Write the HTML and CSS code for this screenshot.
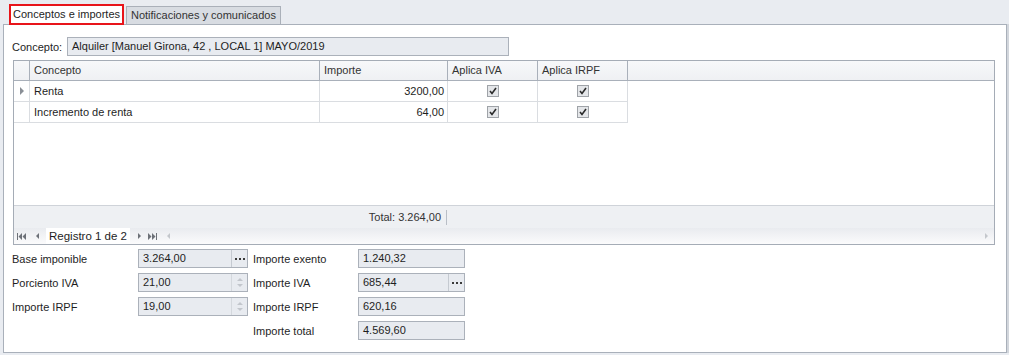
FILE: index.html
```html
<!DOCTYPE html>
<html lang="es">
<head>
  <meta charset="UTF-8">
  <title>Conceptos e importes</title>
  <link rel="stylesheet" href="styles.css">
</head>
<body>
  <div class="tabs">
    <div class="tab active">Conceptos e importes</div>
    <div class="tab">Notificaciones y comunicados</div>
  </div>
  <div class="panel">
    <div class="concept-row">
      <span class="lbl">Concepto:</span>
      <div class="box concept-box">Alquiler [Manuel Girona, 42 , LOCAL 1] MAYO/2019</div>
    </div>

    <div class="grid">
      <div class="row head">
        <div class="c ind"></div>
        <div class="c">Concepto</div>
        <div class="c">Importe</div>
        <div class="c">Aplica IVA</div>
        <div class="c">Aplica IRPF</div>
        <div class="c fill"></div>
      </div>
      <div class="row">
        <div class="c ind"><span class="arrow"></span></div>
        <div class="c">Renta</div>
        <div class="c num">3200,00</div>
        <div class="c mid"><svg class="chk" width="12" height="12" viewBox="0 0 12 12"><rect x="0.5" y="0.5" width="11" height="11" fill="#e4e6e9" stroke="#9fa3a8"/><path d="M3 6 L5 8.5 L9 3" fill="none" stroke="#2b2b2b" stroke-width="1.6"/></svg></div>
        <div class="c mid"><svg class="chk" width="12" height="12" viewBox="0 0 12 12"><rect x="0.5" y="0.5" width="11" height="11" fill="#e4e6e9" stroke="#9fa3a8"/><path d="M3 6 L5 8.5 L9 3" fill="none" stroke="#2b2b2b" stroke-width="1.6"/></svg></div>
        <div class="c fill"></div>
      </div>
      <div class="row">
        <div class="c ind"></div>
        <div class="c">Incremento de renta</div>
        <div class="c num">64,00</div>
        <div class="c mid"><svg class="chk" width="12" height="12" viewBox="0 0 12 12"><rect x="0.5" y="0.5" width="11" height="11" fill="#e4e6e9" stroke="#9fa3a8"/><path d="M3 6 L5 8.5 L9 3" fill="none" stroke="#2b2b2b" stroke-width="1.6"/></svg></div>
        <div class="c mid"><svg class="chk" width="12" height="12" viewBox="0 0 12 12"><rect x="0.5" y="0.5" width="11" height="11" fill="#e4e6e9" stroke="#9fa3a8"/><path d="M3 6 L5 8.5 L9 3" fill="none" stroke="#2b2b2b" stroke-width="1.6"/></svg></div>
        <div class="c fill"></div>
      </div>
      <div class="empty"></div>
      <div class="footer">
        <span class="total">Total: 3.264,00</span>
      </div>
      <div class="nav">
        <svg class="nb" width="9" height="7" viewBox="0 0 9 7"><rect x="0" y="0" width="1" height="7" fill="#6d7178"/><path d="M5 0 L1.5 3.5 L5 7 Z M9 0 L5.5 3.5 L9 7 Z" fill="#6d7178"/></svg>
        <span class="tri-l"></span>
        <span class="rec">Registro 1 de 2</span>
        <span class="tri-r"></span>
        <svg class="nb" width="9" height="7" viewBox="0 0 9 7"><path d="M0 0 L3.5 3.5 L0 7 Z M4 0 L7.5 3.5 L4 7 Z" fill="#6d7178"/><rect x="8" y="0" width="1" height="7" fill="#6d7178"/></svg>
        <span class="tri-l off"></span>
        <span class="spacer"></span>
        <span class="tri-r off"></span>
      </div>
    </div>

    <div class="form">
      <span class="lbl">Base imponible</span>
      <div class="box btn-box"><span>3.264,00</span><span class="dots"><i></i><i></i><i></i></span></div>
      <span class="lbl">Importe exento</span>
      <div class="box">1.240,32</div>

      <span class="lbl">Porciento IVA</span>
      <div class="box btn-box"><span>21,00</span><span class="spin"><i class="up"></i><i class="down"></i></span></div>
      <span class="lbl">Importe IVA</span>
      <div class="box btn-box"><span>685,44</span><span class="dots"><i></i><i></i><i></i></span></div>

      <span class="lbl">Importe IRPF</span>
      <div class="box btn-box"><span>19,00</span><span class="spin"><i class="up"></i><i class="down"></i></span></div>
      <span class="lbl">Importe IRPF</span>
      <div class="box">620,16</div>

      <span></span>
      <span></span>
      <span class="lbl">Importe total</span>
      <div class="box">4.569,60</div>
    </div>
  </div>
</body>
</html>
```

FILE: styles.css
```css
body {
  margin: 0;
  background: #e9ecf1;
  font-family: "Liberation Sans", Arial, sans-serif;
  font-size: 11px;
  color: #1e1e1e;
}
.tabs {
  display: flex;
  align-items: flex-end;
  height: 24px;
  padding-left: 9px;
}
.tab {
  box-sizing: border-box;
  height: 18px;
  padding: 0 4px;
  line-height: 16px;
  background: #d8dce2;
  border: 1px solid #aab0b9;
  border-bottom: none;
  color: #333;
  margin-left: 2px;
}
.tab.active {
  height: 21px;
  line-height: 17px;
  margin: 0 0 -1px 0;
  padding: 0 2px;
  background: #fff;
  border: 2px solid #e8141a;
  color: #1e1e1e;
  position: relative;
  z-index: 1;
}
.panel {
  box-sizing: border-box;
  margin-left: 3px;
  width: 1004px;
  height: 329px;
  background: #fff;
  border: 1px solid #a9b0ba;
  box-shadow: 2px 0 0 #d2d6dc;
  padding: 12px 0 0 8px;
}
.concept-row {
  display: flex;
  align-items: center;
  height: 19px;
}
.concept-row .lbl {
  width: 55px;
}
.box {
  box-sizing: border-box;
  height: 19px;
  line-height: 17px;
  background: #e8ebf0;
  border: 1px solid #abb1ba;
  padding-left: 4px;
  color: #1e1e1e;
}
.concept-box {
  width: 442px;
}
.grid {
  box-sizing: border-box;
  margin-top: 4px;
  margin-left: 1px;
  width: 982px;
  height: 185px;
  border: 1px solid #a5acb6;
  display: flex;
  flex-direction: column;
}
.row {
  display: grid;
  grid-template-columns: 16px 290px 128px 90px 90px 1fr;
  height: 21px;
}
.row .c {
  box-sizing: border-box;
  border-right: 1px solid #dadde1;
  border-bottom: 1px solid #dadde1;
  padding: 0 4px;
  line-height: 20px;
  white-space: nowrap;
}
.row.head {
  height: 20px;
  background: linear-gradient(#f7f8fa, #eef0f3);
}
.row.head .c {
  border-right: 1px solid #a9b0ba;
  border-bottom: 1px solid #a9b0ba;
  line-height: 19px;
  color: #333;
}
.row .c.fill {
  border: none;
}
.row.head .c.fill {
  border-bottom: 1px solid #a9b0ba;
}
.c.ind {
  padding: 0;
  display: flex;
  align-items: center;
  justify-content: center;
}
.arrow {
  width: 0;
  height: 0;
  border-left: 4px solid #8a8f96;
  border-top: 4px solid transparent;
  border-bottom: 4px solid transparent;
}
.c.num {
  text-align: right;
  padding-right: 3px;
}
.c.mid {
  display: flex;
  align-items: center;
  justify-content: center;
}
.empty {
  flex: 1;
}
.footer {
  box-sizing: border-box;
  height: 23px;
  border-top: 1px solid #cfd3d9;
  background: #eef0f3;
  display: flex;
  align-items: center;
  padding-left: 307px;
}
.total {
  width: 120px;
  white-space: nowrap;
  text-align: right;
  padding-right: 5px;
  border-right: 1px solid #b9bec6;
  line-height: 15px;
  color: #333;
}
.nav {
  height: 16px;
  display: flex;
  align-items: center;
  background: linear-gradient(#e9ebef, #fbfbfc);
  padding-left: 3px;
}
.nb {
  margin: 0 4px 0 0;
}
.tri-l, .tri-r {
  width: 0;
  height: 0;
  margin: 0 7px 0 6px;
  border-top: 3.5px solid transparent;
  border-bottom: 3.5px solid transparent;
}
.tri-l {
  border-right: 3.5px solid #6d7178;
}
.tri-r {
  border-left: 3.5px solid #6d7178;
}
.tri-l.off {
  border-right-color: #c4c7cc;
}
.tri-r.off {
  border-left-color: #c4c7cc;
  margin-right: 6px;
}
.rec {
  background: #fff;
  color: #1e1e1e;
  font-size: 11.5px;
  line-height: 16px;
  padding: 0 3px;
  margin-right: 2px;
}
.spacer {
  flex: 1;
}
.form {
  display: grid;
  grid-template-columns: 126px 110px 110px 107px;
  grid-auto-rows: 19px;
  row-gap: 5px;
  margin-top: 4px;
  align-items: center;
}
.form > .lbl:nth-child(4n+3) {
  padding-left: 5px;
}
.btn-box {
  display: flex;
  justify-content: space-between;
  padding-right: 0;
}
.dots {
  box-sizing: border-box;
  width: 16px;
  height: 17px;
  border-left: 1px solid #c5cad1;
  display: flex;
  align-items: center;
  justify-content: center;
  gap: 2px;
}
.dots i {
  width: 2px;
  height: 2px;
  background: #3a3a3a;
}
.spin {
  box-sizing: border-box;
  width: 16px;
  height: 17px;
  border-left: 1px solid #d4d8dd;
  display: flex;
  flex-direction: column;
  align-items: center;
  justify-content: center;
  gap: 3px;
}
.spin i {
  width: 0;
  height: 0;
  border-left: 3px solid transparent;
  border-right: 3px solid transparent;
}
.spin .up {
  border-bottom: 3px solid #c2c6cc;
}
.spin .down {
  border-top: 3px solid #c2c6cc;
}
```
